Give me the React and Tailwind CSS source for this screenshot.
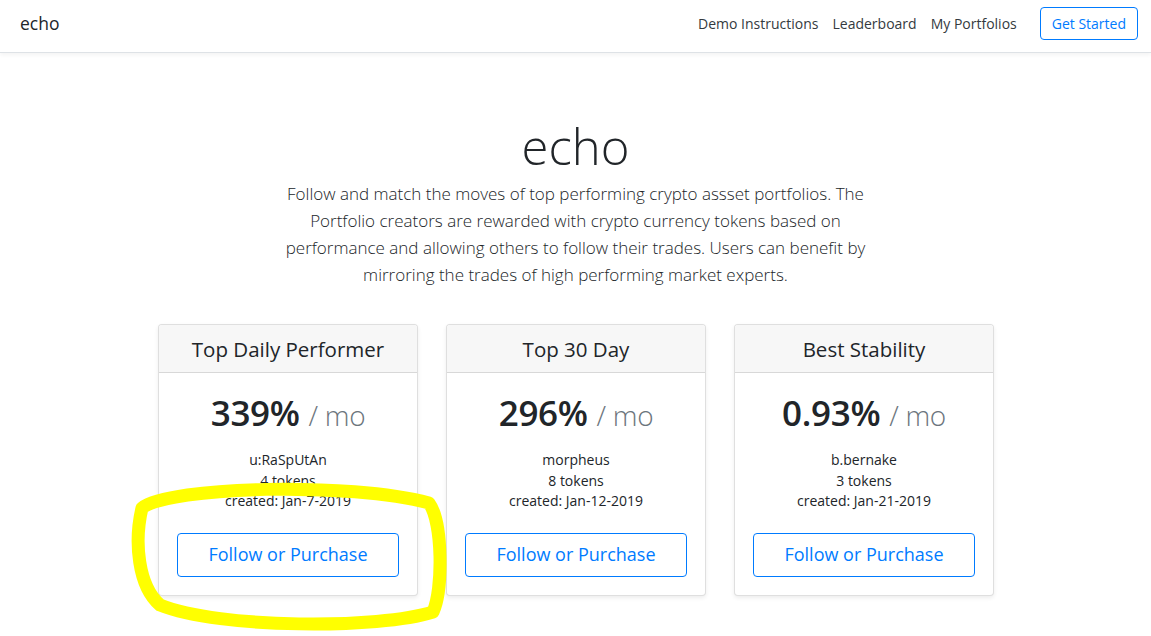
import React from 'react';

const cards = [
  { title: 'Top Daily Performer', rate: '339%', user: 'u:RaSpUtAn', tokens: '4 tokens', created: 'created: Jan-7-2019' },
  { title: 'Top 30 Day', rate: '296%', user: 'morpheus', tokens: '8 tokens', created: 'created: Jan-12-2019' },
  { title: 'Best Stability', rate: '0.93%', user: 'b.bernake', tokens: '3 tokens', created: 'created: Jan-21-2019' },
];

const PortfolioCard = ({ card }) => (
  <div className="w-[260px] bg-white border border-[rgba(0,0,0,0.125)] rounded-[4px] shadow-[0_2px_4px_rgba(0,0,0,0.075)] flex flex-col overflow-hidden">
    <div className="h-[48px] pt-[2px] bg-[#f7f7f7] border-b border-[rgba(0,0,0,0.125)] flex items-center justify-center">
      <h4 className="text-[20.5px] font-normal text-[#212529]">{card.title}</h4>
    </div>
    <div className="p-[18px] flex flex-col items-center">
      <h1 className="h-[43px] leading-[43px] text-[35px] font-semibold text-[#212529] tracking-[-0.3px]">
        {card.rate} <span className="text-[28px] font-light text-[#6c757d]">/ mo</span>
      </h1>
      <ul className="mt-[16px] mb-[21px] text-center text-[14px] leading-[20.5px] text-[#212529]">
        <li>{card.user}</li>
        <li>{card.tokens}</li>
        <li>{card.created}</li>
      </ul>
      <button className="w-full h-[44px] border border-[#007bff] rounded-[4px] text-[#007bff] text-[18px] bg-white">
        Follow or Purchase
      </button>
    </div>
  </div>
);

export default function App() {
  return (
    <div className="relative min-h-[636px] bg-white text-[#212529] font-['Open_Sans',sans-serif]">
      {/* Navbar */}
      <header className="h-[53px] pb-[6px] flex items-center justify-between pl-[20px] pr-[13px] border-b border-[#dee2e6] shadow-[0_2px_4px_rgba(0,0,0,0.05)]">
        <span className="text-[17.5px] text-[#212529]">echo</span>
        <nav className="flex items-center">
          <a className="px-[7px] text-[14px] text-[#343a40]">Demo Instructions</a>
          <a className="px-[7px] text-[14px] text-[#343a40]">Leaderboard</a>
          <a className="px-[7px] text-[14px] text-[#343a40]">My Portfolios</a>
          <a className="ml-[16px] h-[33px] px-[11px] flex items-center border border-[#007bff] rounded-[4px] text-[14px] text-[#007bff]">
            Get Started
          </a>
        </nav>
      </header>

      {/* Hero */}
      <div className="pt-[63px] flex flex-col items-center text-center">
        <h1 className="text-[49px] leading-[60px] font-light text-[#212529]">echo</h1>
        <p className="mt-[4px] max-w-[600px] text-[17px] leading-[27px] font-light text-[#212529]">
          Follow and match the moves of top performing crypto assset portfolios. The Portfolio creators are rewarded with crypto currency tokens based on performance and allowing others to follow their trades. Users can benefit by mirroring the trades of high performing market experts.
        </p>
      </div>

      {/* Cards */}
      <div className="mt-[36px] flex justify-center gap-[28px] pl-[1px]">
        {cards.map((card) => (
          <PortfolioCard key={card.title} card={card} />
        ))}
      </div>

      {/* hand-drawn highlight */}
      <svg className="absolute top-0 left-0 pointer-events-none" width="1151" height="636" viewBox="0 0 1151 636">
        <path
          d="M 142 508 C 170 486, 350 482, 429 503 C 443 522, 443 590, 433 612 C 380 629, 220 629, 160 605 C 138 586, 134 542, 142 508 Z"
          fill="none"
          stroke="#ffff00"
          strokeWidth="13"
          strokeLinecap="round"
          strokeLinejoin="round"
        />
      </svg>
    </div>
  );
}
